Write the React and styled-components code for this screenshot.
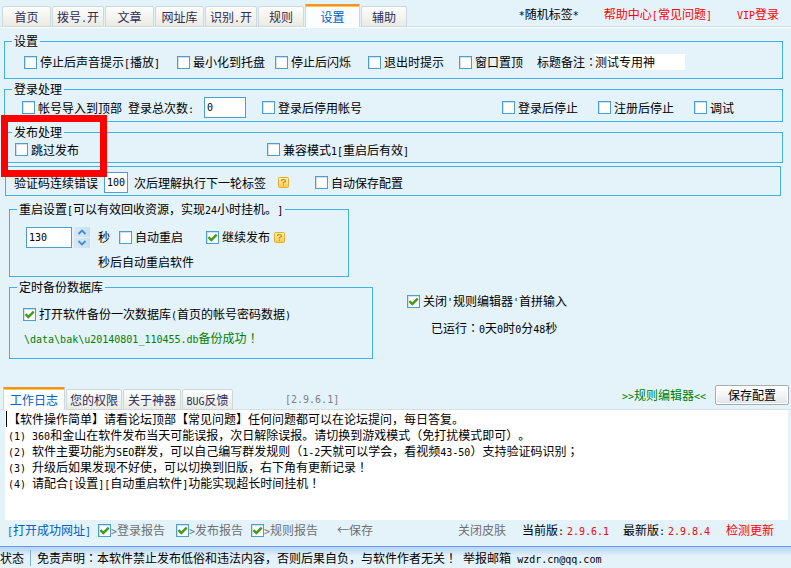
import React, { useState } from "react";
import styled, { createGlobalStyle, css } from "styled-components";

const GlobalStyle = createGlobalStyle`
  * {
    box-sizing: border-box;
  }

  body {
    margin: 0;
    background: #e4f2fa;
    text-spacing-trim: space-all;
  }

  body, button, input {
    font-family: "Noto Sans CJK SC", sans-serif;
    font-size: 12px;
    line-height: 16px;
    color: #000000;
  }
`;

const Page = styled.div`
  min-height: 100vh;
  display: flex;
  flex-direction: column;
  white-space: nowrap;
`;

/* half-width glyphs, two of them are as wide as one Chinese character */
const Half = styled.span`
  font-family: "DejaVu Sans Mono", monospace;
  font-size: 10px;
  line-height: 1;
  white-space: pre;
`;

const Centered = styled.span`
  font-family: "Noto Sans CJK TC", sans-serif;
  line-height: 1;
`;

const TopBar = styled.header`
  display: flex;
  align-items: flex-end;
  height: 28px;
  padding-left: 2px;
  border-bottom: 1px solid #ffffff;
  box-shadow: inset 0 -1px 0 #cfdbe4;
`;

const Tabs = styled.div`
  display: flex;
  align-items: flex-end;
  gap: 1px;
`;

const Tab = styled.button`
  width: ${(props) => props.$width}px;
  height: 21px;
  padding: 0;
  border: 1px solid #cdd7de;
  border-radius: 2px 2px 0 0;
  background: linear-gradient(#fdfdfc, #ebebe4);
  color: #2d2b58;
  cursor: pointer;

  ${(props) =>
    props.$active &&
    css`
      height: 23px;
      border-top: 2px solid #ee9330;
      border-bottom: none;
      border-radius: 1px 1px 0 0;
      background: #fbfdff;
      box-shadow: inset 0 1px 0 #ffc83c;
      color: #0060bf;
    `}
`;

const TopLinks = styled.nav`
  display: flex;
  align-self: center;
  gap: 25px;
  margin-left: auto;
  padding-right: 12px;
`;

const Link = styled.a`
  color: ${(props) => props.$color || "#ff0000"};
  text-decoration: none;
`;

const Settings = styled.main`
  display: flex;
  flex-direction: column;
  gap: 2px;
  padding: 5px 8px 0 4px;
`;

const Group = styled.fieldset`
  position: relative;
  min-width: 0;
  margin: 0;
  padding: ${(props) => props.$top || 0}px 0 ${(props) => props.$bottom || 0}px
    ${(props) => props.$left}px;
  border: 1px solid #41b1e1;
`;

const PlainGroup = styled(Group)`
  margin: 1px 2px 0 1px;
`;

const Legend = styled.legend`
  margin-left: ${(props) => -props.$left + 7}px;
  padding: 0 2px;
  line-height: 16px;
`;

const Row = styled.div`
  display: grid;
  grid-template-columns: ${(props) => props.$cols};
  align-items: center;
  height: ${(props) => props.$height}px;
`;

const Columns = styled.div`
  display: grid;
  grid-template-columns: 364px 1fr;
  column-gap: 34px;
  row-gap: 2px;
  padding: 3px 0 0 5px;
`;

const RestartCell = styled.div`
  grid-column: 1 / -1;
  width: 340px;
`;

const Side = styled.div`
  padding-top: 14px;
`;

const RunTime = styled.div`
  padding: 9px 0 0 24px;
`;

const CheckLabel = styled.label`
  display: inline-flex;
  align-items: center;
  gap: ${(props) => (props.$tight ? 0 : 3)}px;
  color: ${(props) => props.$color || "#000000"};
`;

const CheckBox = styled.span`
  position: relative;
  display: block;
  width: 13px;
  height: 13px;
  flex: none;

  input {
    display: block;
    appearance: none;
    width: 13px;
    height: 13px;
    margin: 0;
    border: 1px solid #4b9fd0;
    background: #ffffff;
    box-shadow: inset 1px 1px 1px #d4dbe3;
  }

  svg {
    position: absolute;
    inset: 0;
    pointer-events: none;
  }
`;

const TextBox = styled.input`
  width: ${(props) => props.$width}px;
  height: 21px;
  padding: 0 2px;
  border: 1px solid #4b9fd0;
  border-radius: 0;
  background: #ffffff;
  font-family: "DejaVu Sans Mono", monospace;
  font-size: 10px;
  outline: none;
`;

const NoteBox = styled.input`
  width: 90px;
  height: 16px;
  padding: 0;
  border: none;
  background: #ffffff;
  outline: none;
`;

const Stepper = styled.div`
  display: flex;
  gap: 2px;
`;

const StepButtons = styled.div`
  display: flex;
  flex-direction: column;
  gap: 1px;
`;

const StepButton = styled.button`
  display: flex;
  align-items: center;
  justify-content: center;
  width: 16px;
  height: 10px;
  padding: 0;
  border: none;
  background: linear-gradient(90deg, #d9e9f4, #c9dfee);
`;

const HelpButton = styled.button`
  display: block;
  width: 11px;
  height: 11px;
  padding: 0;
  border: none;
  background: none;

  svg {
    display: block;
  }
`;

const RestartNote = styled.div`
  padding-left: 72px;
`;

const BackupResult = styled.div`
  padding-left: 1px;
  color: #008000;
`;

const RedFrame = styled.div`
  position: absolute;
  top: -25px;
  left: -4px;
  width: 106px;
  height: 62px;
  border: 7px solid #ff0000;
  z-index: 1;
  pointer-events: none;
`;

const LogBar = styled.div`
  display: flex;
  align-items: flex-end;
  height: 25px;
  margin-top: 26px;
  padding: 0 2px 0 3px;
  box-shadow: inset 0 -1px 0 #d5e1e6;
`;

const Version = styled.span`
  align-self: center;
  margin-left: 52px;
  color: #808080;
`;

const LogActions = styled.div`
  display: flex;
  align-items: center;
  align-self: flex-start;
  gap: 9px;
  margin-left: auto;
`;

const SaveButton = styled.button`
  width: 74px;
  height: 20px;
  padding: 0;
  border: 1px solid #a3adb6;
  border-radius: 2px;
  background: linear-gradient(#ffffff, #f3f5f7 50%, #dfe4e8);
  box-shadow: inset 0 0 0 1px #ffffff;
`;

const Log = styled.section`
  flex: 1;
  margin: 0 3px 0 5px;
  padding: 1px 1px;
  background: #ffffff;
`;

const LogLine = styled.p`
  margin: 0;
  padding-left: 1px;
  border-left: 1px solid ${(props) => (props.$caret ? "#000000" : "transparent")};
`;

const Footer = styled(Row)`
  height: 26px;
  padding: 0 0 6px 7px;
`;

const Muted = styled.span`
  color: #707070;
`;

const Red = styled.span`
  color: #ff0000;
`;

const StatusBar = styled.footer`
  display: flex;
  align-items: center;
  height: 22px;
  border-top: 1px solid #6699f0;
  background: linear-gradient(#b4d2f4, #e4f2fa 9px);
`;

const StatusCell = styled.span`
  padding-right: 6px;
  margin-right: 6px;
  border-right: 1px solid #7fb2dd;
`;

const mainTabs = [
  { text: "首页", width: 49 },
  { text: "拨号.开", width: 52 },
  { text: "文章", width: 49 },
  { text: "网址库", width: 49 },
  { text: "识别.开", width: 52 },
  { text: "规则", width: 46 },
  { text: "设置", width: 55 },
  { text: "辅助", width: 46 },
];

const logTabs = [
  { text: "工作日志", width: 62 },
  { text: "您的权限", width: 56 },
  { text: "关于神器", width: 58 },
  { text: "BUG反馈", width: 51 },
];

const logLines = [
  "【软件操作简单】请看论坛顶部【常见问题】任何问题都可以在论坛提问，每日答复。",
  "(1) 360和金山在软件发布当天可能误报，次日解除误报。请切换到游戏模式（免打扰模式即可）。",
  "(2) 软件主要功能为SEO群发，可以自己编写群发规则（1-2天就可以学会，看视频43-50）支持验证码识别；",
  "(3) 升级后如果发现不好使，可以切换到旧版，右下角有更新记录！",
  "(4) 请配合[设置][自动重启软件]功能实现超长时间挂机！",
];

const Text = ({ children }) =>
  children
    .split(/([\x20-\x7e]+|[：！；])/)
    .filter(Boolean)
    .map((part, index) => {
      if (/^[\x20-\x7e]/.test(part)) return <Half key={index}>{part}</Half>;
      if (/^[：！；]/.test(part)) return <Centered key={index}>{part}</Centered>;
      return <React.Fragment key={index}>{part}</React.Fragment>;
    });

const Check = ({ label, defaultChecked = false, color, tight }) => {
  const [checked, setChecked] = useState(defaultChecked);

  return (
    <CheckLabel $color={color} $tight={tight}>
      <CheckBox>
        <input
          type="checkbox"
          checked={checked}
          onChange={(e) => setChecked(e.target.checked)}
        />
        {checked && (
          <svg width="13" height="13" viewBox="0 0 13 13">
            <path
              d="M2.5 6.2 L5.3 9 L10.7 3.6"
              fill="none"
              stroke="#3f9b12"
              strokeWidth="2.4"
            />
          </svg>
        )}
      </CheckBox>
      <span>
        <Text>{label}</Text>
      </span>
    </CheckLabel>
  );
};

const Help = () => (
  <HelpButton type="button" aria-label="帮助">
    <svg width="11" height="11" viewBox="0 0 11 11">
      <defs>
        <linearGradient id="help" x1="0" y1="0" x2="0" y2="1">
          <stop offset="0" stopColor="#fff3b8" />
          <stop offset="1" stopColor="#fbc94a" />
        </linearGradient>
      </defs>
      <rect x="0.5" y="0.5" width="10" height="10" rx="1" fill="url(#help)" stroke="#e5ae33" />
      <path
        d="M3.5 4 V3.5 Q3.5 2.5 5.5 2.5 Q7.5 2.5 7.5 4 Q7.5 5 5.5 5.5 V6.5 M5.5 7.5 V8.7"
        fill="none"
        stroke="#c98506"
        strokeWidth="1.2"
      />
    </svg>
  </HelpButton>
);

const Chevron = ({ down }) => (
  <svg width="10" height="6" viewBox="0 0 10 6">
    <path
      d={down ? "M1.5 1 L5 4.5 L8.5 1" : "M1.5 5 L5 1.5 L8.5 5"}
      fill="none"
      stroke="#3c8fd6"
      strokeWidth="1.8"
    />
  </svg>
);

const TabList = ({ tabs, initial }) => {
  const [active, setActive] = useState(initial);

  return (
    <Tabs role="tablist">
      {tabs.map((tab) => (
        <Tab
          key={tab.text}
          type="button"
          role="tab"
          aria-selected={tab.text === active}
          $width={tab.width}
          $active={tab.text === active}
          onClick={() => setActive(tab.text)}
        >
          <Text>{tab.text}</Text>
        </Tab>
      ))}
    </Tabs>
  );
};

const App = () => {
  const [seconds, setSeconds] = useState(130);

  return (
    <Page>
      <GlobalStyle />
      <TopBar>
        <TabList tabs={mainTabs} initial="设置" />
        <TopLinks>
          <Link href="#tag" $color="#000000">
            <Text>*随机标签*</Text>
          </Link>
          <Link href="#help">
            <Text>帮助中心[常见问题]</Text>
          </Link>
          <Link href="#vip">
            <Text>VIP登录</Text>
          </Link>
        </TopLinks>
      </TopBar>

      <Settings>
        <Group $left={19} $bottom={3}>
          <Legend $left={19}>设置</Legend>
          <Row $height={26} $cols="153px 98px 93px 91px 78px 58px 1fr">
            <Check label="停止后声音提示[播放]" />
            <Check label="最小化到托盘" />
            <Check label="停止后闪烁" />
            <Check label="退出时提示" />
            <Check label="窗口置顶" />
            <label htmlFor="note">
              <Text>标题备注：</Text>
            </label>
            <NoteBox id="note" defaultValue="测试专用神" />
          </Row>
        </Group>

        <Group $left={17} $bottom={3}>
          <Legend $left={17}>登录处理</Legend>
          <Row $height={21} $cols="106px 76px 58px 1fr 96px 96px 88px">
            <Check label="帐号导入到顶部" />
            <label htmlFor="logins">
              <Text>登录总次数:</Text>
            </label>
            <TextBox id="logins" $width={42} defaultValue="0" />
            <Check label="登录后停用帐号" />
            <Check label="登录后停止" />
            <Check label="注册后停止" />
            <Check label="调试" />
          </Row>
        </Group>

        <Group $left={10} $bottom={3}>
          <Legend $left={10}>发布处理</Legend>
          <RedFrame />
          <Row $height={19} $cols="252px 1fr">
            <Check label="跳过发布" />
            <Check label="兼容模式1[重启后有效]" />
          </Row>
        </Group>

        <PlainGroup $left={8} $top={3}>
          <Row $height={25} $cols="90px 30px 144px 37px 1fr">
            <label htmlFor="errors">验证码连续错误</label>
            <TextBox id="errors" $width={24} defaultValue="100" />
            <span>次后理解执行下一轮标签</span>
            <Help />
            <Check label="自动保存配置" />
          </Row>
        </PlainGroup>

        <Columns>
          <RestartCell>
            <Group $left={16} $top={3} $bottom={6}>
              <Legend $left={16}>
                <Text>重启设置[可以有效回收资源，实现24小时挂机。]</Text>
              </Legend>
              <Row $height={34} $cols="72px 21px 87px 68px 1fr">
                <Stepper>
                  <TextBox
                    aria-label="重启秒数"
                    $width={46}
                    value={seconds}
                    onChange={(e) => setSeconds(Number(e.target.value) || 0)}
                  />
                  <StepButtons>
                    <StepButton
                      type="button"
                      aria-label="增加"
                      onClick={() => setSeconds(seconds + 1)}
                    >
                      <Chevron />
                    </StepButton>
                    <StepButton
                      type="button"
                      aria-label="减少"
                      onClick={() => setSeconds(seconds - 1)}
                    >
                      <Chevron down />
                    </StepButton>
                  </StepButtons>
                </Stepper>
                <span>秒</span>
                <Check label="自动重启" />
                <Check label="继续发布" defaultChecked />
                <Help />
              </Row>
              <RestartNote>秒后自动重启软件</RestartNote>
            </Group>
          </RestartCell>

          <Group $left={13} $top={3} $bottom={12}>
            <Legend $left={13}>定时备份数据库</Legend>
            <Row $height={32} $cols="1fr">
              <Check label="打开软件备份一次数据库(首页的帐号密码数据)" defaultChecked />
            </Row>
            <BackupResult>
              <Text>\data\bak\u20140801_110455.db备份成功！</Text>
            </BackupResult>
          </Group>
          <Side>
            <Check label="关闭'规则编辑器'首拼输入" defaultChecked />
            <RunTime>
              <Text>已运行：0天0时0分48秒</Text>
            </RunTime>
          </Side>
        </Columns>
      </Settings>

      <LogBar>
        <TabList tabs={logTabs} initial="工作日志" />
        <Version>
          <Text>[2.9.6.1]</Text>
        </Version>
        <LogActions>
          <Link href="#editor" $color="#008000">
            <Text>{">>规则编辑器<<"}</Text>
          </Link>
          <SaveButton type="button">保存配置</SaveButton>
        </LogActions>
      </LogBar>

      <Log>
        {logLines.map((line, index) => (
          <LogLine key={line} $caret={index === 0}>
            <Text>{line}</Text>
          </LogLine>
        ))}
      </Log>

      <Footer $cols="91px 78px 75px 86px 1fr 64px 45px 56px 45px 58px 65px">
        <Link href="#urls" $color="#0060bf">
          <Text>[打开成功网址]</Text>
        </Link>
        <Check label=">登录报告" color="#707070" tight defaultChecked />
        <Check label=">发布报告" color="#707070" tight defaultChecked />
        <Check label=">规则报告" color="#707070" tight defaultChecked />
        <Muted>←保存</Muted>
        <Muted>关闭皮肤</Muted>
        <span>
          <Text>当前版:</Text>
        </span>
        <Red>
          <Text>2.9.6.1</Text>
        </Red>
        <span>
          <Text>最新版:</Text>
        </span>
        <Red>
          <Text>2.9.8.4</Text>
        </Red>
        <Link href="#update">检测更新</Link>
      </Footer>

      <StatusBar>
        <StatusCell>状态</StatusCell>
        <span>
          <Text>
            免责声明：本软件禁止发布低俗和违法内容，否则后果自负，与软件作者无关！ 举报邮箱 wzdr.cn@qq.com
          </Text>
        </span>
      </StatusBar>
    </Page>
  );
};

export default App;
